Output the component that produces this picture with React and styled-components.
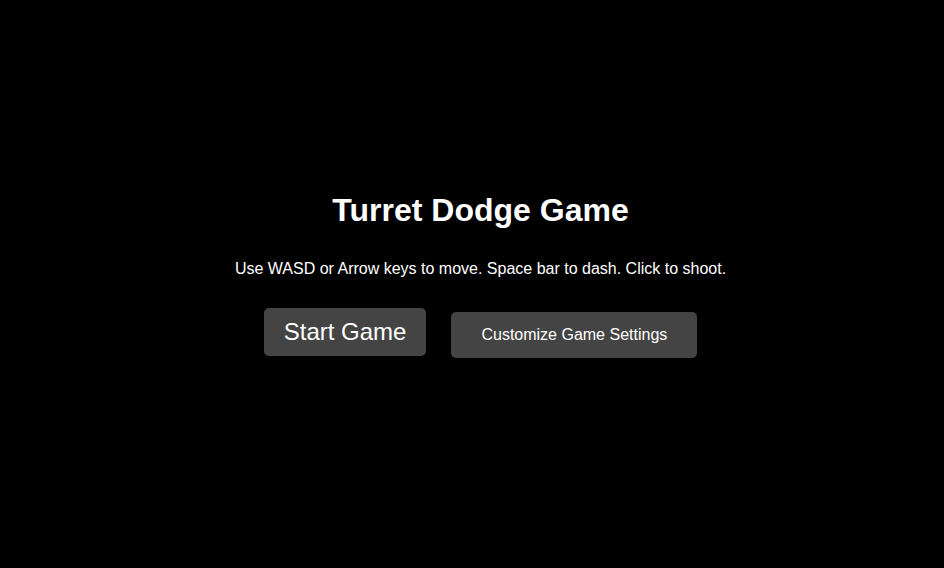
import React from 'react';
import styled, { createGlobalStyle } from 'styled-components';

const GlobalStyle = createGlobalStyle`
  body {
    margin: 0;
    background-color: #000;
    color: #fff;
    font-family: "Liberation Sans", Arial, sans-serif;
    overflow: hidden;
  }
`;

const Screen = styled.div`
  min-height: 100vh;
  display: flex;
  flex-direction: column;
  align-items: center;
  padding: 192px 0 0 17px;
  box-sizing: border-box;
`;

const Title = styled.h1`
  margin: 0 0 31px;
  font-size: 32px;
  font-weight: bold;
`;

const Hint = styled.p`
  margin: 0 0 30px;
  font-size: 16px;
`;

const ButtonRow = styled.div`
  display: flex;
  align-items: baseline;
  gap: 25px;
`;

const MenuButton = styled.button`
  background-color: #444;
  color: #fff;
  border: none;
  border-radius: 5px;
  font-family: inherit;
  font-size: ${(p) => (p.$big ? '24px' : '16px')};
  padding: ${(p) => (p.$big ? '10px 20px' : '14px 30px')};
  cursor: pointer;
`;

const App = () => {
  return (
    <>
      <GlobalStyle />
      <Screen>
        <Title>Turret Dodge Game</Title>
        <Hint>Use WASD or Arrow keys to move. Space bar to dash. Click to shoot.</Hint>
        <ButtonRow>
          <MenuButton $big>Start Game</MenuButton>
          <MenuButton>Customize Game Settings</MenuButton>
        </ButtonRow>
      </Screen>
    </>
  );
};

export default App;
